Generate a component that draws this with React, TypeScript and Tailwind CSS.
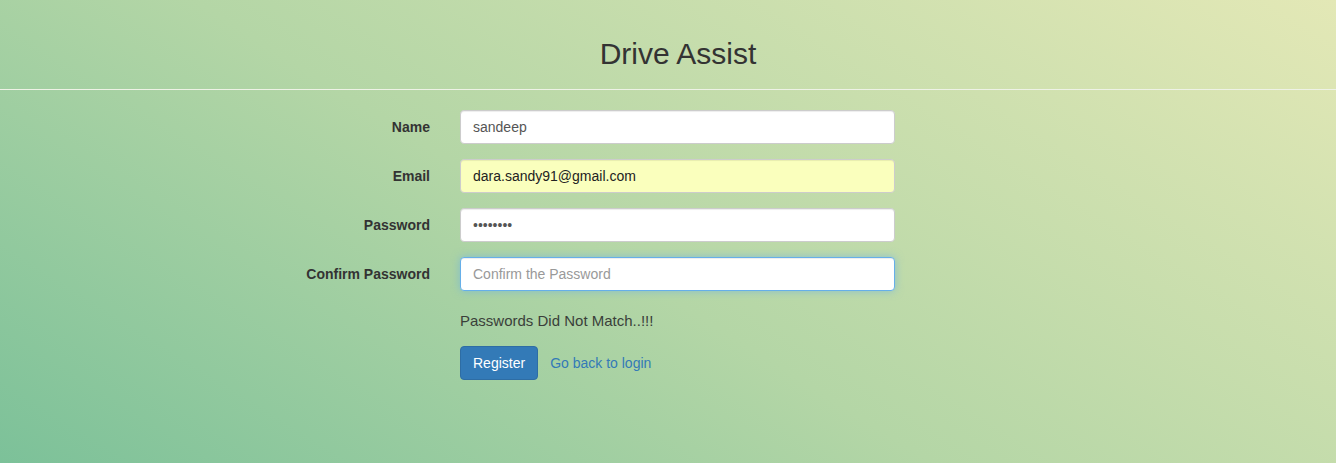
export default function App() {
  const inputBase =
    'block h-[34px] w-[435px] rounded-[4px] border px-3 py-[6px] text-[14px] leading-5 outline-none';

  return (
    <div
      className="h-screen w-full overflow-hidden bg-[linear-gradient(32deg,#7cc199_0%,#b4d6a6_45%,#e3e8b6_100%)] text-[#333]"
      style={{ fontFamily: '"Liberation Sans", Arial, sans-serif' }}
    >
      <header className="pt-[37px] pl-5">
        <h2 className="text-center text-[30px] leading-[33px] font-normal text-[#333]">Drive Assist</h2>
      </header>
      <hr className="mt-[19px] border-0 border-t border-[#eef2e6]" />

      <form className="mx-auto mt-5 flex w-[1170px] flex-col gap-[15px]">
        <div className="flex items-center">
          <label className="w-[347px] text-right text-[14px] font-bold">Name</label>
          <input
            type="text"
            defaultValue="sandeep"
            className={`${inputBase} ml-[30px] border-[#ccc] bg-white text-[#555] shadow-[inset_0_1px_1px_rgba(0,0,0,0.075)]`}
          />
        </div>

        <div className="flex items-center">
          <label className="w-[347px] text-right text-[14px] font-bold">Email</label>
          <input
            type="email"
            defaultValue="dara.sandy91@gmail.com"
            className={`${inputBase} ml-[30px] border-[#ccc] bg-[#faffbd] text-[#222] shadow-[inset_0_1px_1px_rgba(0,0,0,0.075)]`}
          />
        </div>

        <div className="flex items-center">
          <label className="w-[347px] text-right text-[14px] font-bold">Password</label>
          <input
            type="password"
            defaultValue="sandeep1"
            className={`${inputBase} ml-[30px] border-[#ccc] bg-white text-[#555] shadow-[inset_0_1px_1px_rgba(0,0,0,0.075)]`}
          />
        </div>

        <div className="flex items-center">
          <label className="w-[347px] text-right text-[14px] font-bold">Confirm Password</label>
          <input
            type="password"
            placeholder="Confirm the Password"
            className={`${inputBase} ml-[30px] border-[#66afe9] bg-white text-[#555] placeholder:text-[#999] shadow-[inset_0_1px_1px_rgba(0,0,0,0.075),0_0_8px_rgba(102,175,233,0.6)]`}
          />
        </div>

        <div className="mt-[5px] ml-[377px] text-[15px] leading-5 text-[#3a3f3a]">Passwords Did Not Match..!!!</div>

        <div className="ml-[377px] flex items-center gap-3">
          <button
            type="button"
            className="h-[34px] rounded-[4px] border border-[#2e6da4] bg-[#337ab7] px-3 text-[14px] text-white"
          >
            Register
          </button>
          <a href="#" className="text-[14px] text-[#337ab7]">
            Go back to login
          </a>
        </div>
      </form>
    </div>
  );
}
